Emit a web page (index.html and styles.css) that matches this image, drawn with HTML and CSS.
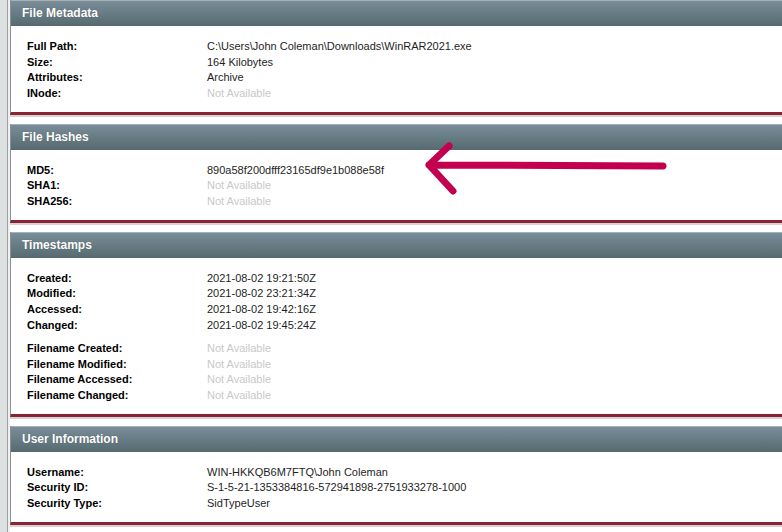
FILE: index.html
```html
<!DOCTYPE html>
<html lang="en">
<head>
    <meta charset="UTF-8">
    <meta name="viewport" content="width=device-width, initial-scale=1.0">
    <title>File Details</title>
    <link rel="stylesheet" href="styles.css">
</head>
<body>

<div class="page">
    <div class="rail"></div>

    <main class="panels">
        <section class="panel">
            <h2 class="panel-title">File Metadata</h2>
            <dl class="props">
                <dt>Full Path:</dt><dd>C:\Users\John Coleman\Downloads\WinRAR2021.exe</dd>
                <dt>Size:</dt><dd>164 Kilobytes</dd>
                <dt>Attributes:</dt><dd>Archive</dd>
                <dt>INode:</dt><dd class="na">Not Available</dd>
            </dl>
        </section>

        <section class="panel">
            <h2 class="panel-title">File Hashes</h2>
            <dl class="props">
                <dt>MD5:</dt><dd>890a58f200dfff23165df9e1b088e58f</dd>
                <dt>SHA1:</dt><dd class="na">Not Available</dd>
                <dt>SHA256:</dt><dd class="na">Not Available</dd>
            </dl>
        </section>

        <section class="panel">
            <h2 class="panel-title">Timestamps</h2>
            <dl class="props">
                <dt>Created:</dt><dd>2021-08-02 19:21:50Z</dd>
                <dt>Modified:</dt><dd>2021-08-02 23:21:34Z</dd>
                <dt>Accessed:</dt><dd>2021-08-02 19:42:16Z</dd>
                <dt>Changed:</dt><dd>2021-08-02 19:45:24Z</dd>
                <dt class="gap">Filename Created:</dt><dd class="gap na">Not Available</dd>
                <dt>Filename Modified:</dt><dd class="na">Not Available</dd>
                <dt>Filename Accessed:</dt><dd class="na">Not Available</dd>
                <dt>Filename Changed:</dt><dd class="na">Not Available</dd>
            </dl>
        </section>

        <section class="panel">
            <h2 class="panel-title">User Information</h2>
            <dl class="props">
                <dt>Username:</dt><dd>WIN-HKKQB6M7FTQ\John Coleman</dd>
                <dt>Security ID:</dt><dd>S-1-5-21-1353384816-572941898-2751933278-1000</dd>
                <dt>Security Type:</dt><dd>SidTypeUser</dd>
            </dl>
        </section>
    </main>

    <!-- annotation drawn over the hashes panel -->
    <svg class="arrow" width="782" height="532" viewBox="0 0 782 532">
        <path d="M663 166 L429 165 M449 146 L429 165 L453 191" fill="none" stroke="#c2004f" stroke-width="7" stroke-linecap="round" stroke-linejoin="round"/>
    </svg>
</div>

</body>
</html>
```

FILE: styles.css
```css
body {
    margin: 0;
    padding: 0;
    background: #ffffff;
    font-family: 'Liberation Sans', Arial, sans-serif;
    font-size: 11px;
    color: #1e1e1e;
    overflow: hidden;
}
.page {
    position: relative;
    display: flex;
    height: 532px;
}
.rail {
    flex: 0 0 10px;
    background: linear-gradient(90deg, #dde1e1 0, #dde1e1 7px, #9ca1a1 7px, #9ca1a1 8px, #eef0f0 8px);
}
.panels {
    flex: 0 0 800px;
}
.panel {
    margin-bottom: 9px;
    border-left: 1px solid #8c8f91;
    border-bottom: 3px solid #8c2333;
    box-shadow: 0 2px 0 #d3d3d3;
    background: #ffffff;
}
.panel-title {
    margin: 0;
    height: 25px;
    line-height: 25px;
    padding-left: 11px;
    border-top: 1px solid #a9b1b5;
    background: linear-gradient(#7a8e9a, #55696f);
    color: #ffffff;
    font-size: 12px;
    font-weight: bold;
    text-shadow: 0 0 1px rgba(0, 0, 0, 0.3);
}
.props {
    display: grid;
    grid-template-columns: 180px 1fr;
    margin: 0;
    padding: 13px 0 10px 16px;
    line-height: 15.67px;
}
.props dt {
    font-weight: bold;
    color: #000000;
}
.props dd {
    margin: 0;
}
.props .na {
    color: #c8c8c8;
}
.props .gap {
    margin-top: 7.5px;
}
.arrow {
    position: absolute;
    left: 0;
    top: 0;
    pointer-events: none;
}
```
